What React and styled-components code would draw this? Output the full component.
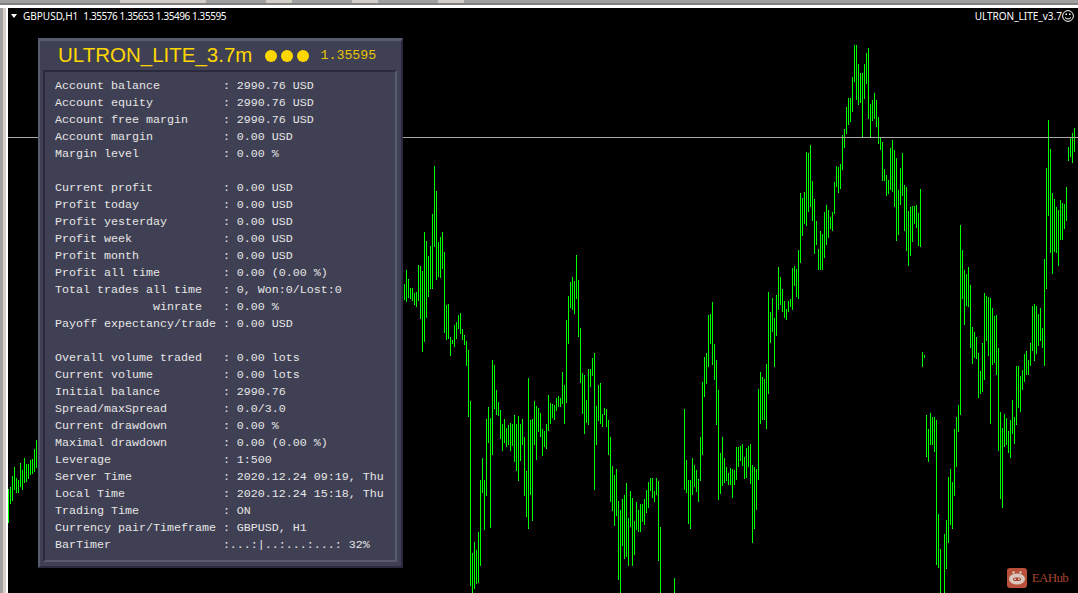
import React from 'react';
import styled, {createGlobalStyle} from 'styled-components';

// bar data is [top, bottom] read off the chart at 3x, every second pixel; null = no bar
const LEFT_BARS = {x: 8, y: 440, bars: [[147,250],[141,192],[108,183],[81,150],[114,159],[120,159],[69,141],[90,150],[54,129],[72,126],[72,117],[60,105],[57,102],[27,96],[0,84]]};

const MID_BARS_A = {x: 404, y: 160, bars: [[372,420],[330,426],[357,414],[384,417],[384,423],[399,435],[396,441],[315,423],[318,477],[333,576],[216,546],[243,474],[288,411],[258,387],[162,387],[18,261],[93,360],[246,351],[231,354],[216,327],[276,519],[435,540],[432,537],[531,588],[540,552],[495,561],[486,537],[465,507],[459,522],[507,540],[525,555],[543,618],[570,771],[723,1278],[1179,1299],[1146,1287],[1170,1272],[1116,1269],[960,1218],[894,999],[960,1110],[777,1008],[741,849],[774,1104],[600,885],[615,747],[690,765],[726,768],[750,837],[792,873],[777,849],[804,861],[795,855],[789,873],[792,858],[765,906],[792,933],[768,963],[792,903],[777,855],[831,1008],[933,1071],[654,1107],[780,1005],[777,1083],[723,855],[738,900],[744,816],[759,831],[807,888],[813,861],[792,867],[705,813],[729,792],[732,774],[735,780],[714,753],[708,741],[714,741],[636,732],[675,792],[480,729],[408,552],[366,444],[351,450],[363,462],[285,417],[360,531],[504,669],[639,762],[645,822],[720,789],[627,795],[627,681],[594,648],[579,990],[738,855],[675,783]]};

const MID_BARS_B = {x: 600, y: 250, bars: [[399,522],[492,531],[474,495],[477,531],[510,615],[561,756],[648,783],[675,828],[657,798],[753,990],[780,1029],[747,888],[735,927],[699,921],[804,948],[723,831],[744,948],[813,915],[756,840],[780,846],[762,846],[762,816],[747,825],[720,789],[696,774],[684,723],[684,744],[723,756],[684,735],[693,933],[831,1029],null,null,null,null,null,null,[984,1029],null,null,null,null,[477,720],[630,729],[690,822],[690,837],[624,735],[645,711],[660,726],[687,756],[561,693],[396,615],[321,441],[309,402],[195,351],[192,282],[156,345],[282,390],[330,525],[420,750],[609,732],[561,708],[624,699],[651,693],[669,705],[654,705],[657,744],[660,705],[591,690],[591,651],[588,633],[582,648],[621,687],[594,684],[588,651],[582,702],[645,879],[651,837],[657,780],[417,690],[366,522],[381,510],[387,510],[342,537],[126,432],[186,279],[144,246],[204,351],[135,258],[51,180],[81,165],[117,186],[153,204],[177,210],[153,186],[147,171],[54,180],[48,108],[57,141],[0,147]]};

const PEAK_BARS = {x: 800, y: 30, bars: [[490,700],[505,618],[487,582],[366,587],[370,545],[345,530],[453,572],[507,671],[573,645],[657,720],[603,720],[612,720],[546,683],[525,645],[540,623],[561,597],[546,603],[456,552],[408,471],[411,489],[402,477],[315,420],[297,354],[231,312],[204,285],[204,276],[141,246],[45,156],[45,210],[102,225],[129,219],[129,324],[102,207],[69,162],[54,267],[222,324],[210,273],[189,267],[210,291],[261,342],[324,360],[336,453],[417,453],[435,498],[450,492],[354,480],[330,486],[360,531],[384,633],[480,615],[414,525],[369,498],[465,603],[471,663],[543,708],[531,678],[528,636],[528,582],[525,594],[549,648],[477,651]]};

const RIGHT_BARS = {x: 922, y: 110, bars: [[726,771],[735,744],[915,1041],[957,1056],[909,1005],[921,1005],[921,1026],[930,1365],[1212,1374],[1317,1449],null,[1272,1449],[1230,1377],[1101,1299],[1077,1245],[1116,1257],[957,1158],[921,1071],[885,966],[345,915],[420,567],[480,645],[492,588],[471,591],[525,714],[651,762],[666,744],[681,747],[729,864],[783,852],[699,846],[549,810],[558,693],[561,738],[564,942],[594,765],[618,759],[615,795],[714,1023],[906,1167],[954,1194],[912,1011],[924,1005],[963,1029],[930,1044],[870,972],[921,1002],[768,945],[768,894],[798,906],[780,840],[732,816],[723,795],[750,795],[699,768],[588,723],[582,753],[588,732],[612,708],[594,693],[654,714],[447,768],[174,537],[30,318],[117,429],[249,492],[267,426],[291,429],[300,468],[270,390],[279,390],[282,357],[231,333],[111,153],[84,141],[69,159],[54,126]]};

const SERIES = [LEFT_BARS, MID_BARS_A, MID_BARS_B, PEAK_BARS, RIGHT_BARS];

const STATS = [
	'Account balance         : 2990.76 USD',
	'Account equity          : 2990.76 USD',
	'Account free margin     : 2990.76 USD',
	'Account margin          : 0.00 USD',
	'Margin level            : 0.00 %',
	'',
	'Current profit          : 0.00 USD',
	'Profit today            : 0.00 USD',
	'Profit yesterday        : 0.00 USD',
	'Profit week             : 0.00 USD',
	'Profit month            : 0.00 USD',
	'Profit all time         : 0.00 (0.00 %)',
	'Total trades all time   : 0, Won:0/Lost:0',
	'              winrate   : 0.00 %',
	'Payoff expectancy/trade : 0.00 USD',
	'',
	'Overall volume traded   : 0.00 lots',
	'Current volume          : 0.00 lots',
	'Initial balance         : 2990.76',
	'Spread/maxSpread        : 0.0/3.0',
	'Current drawdown        : 0.00 %',
	'Maximal drawdown        : 0.00 (0.00 %)',
	'Leverage                : 1:500',
	'Server Time             : 2020.12.24 09:19, Thu',
	'Local Time              : 2020.12.24 15:18, Thu',
	'Trading Time            : ON',
	'Currency pair/Timeframe : GBPUSD, H1',
	'BarTimer                :...:|..:...:...: 32%',
];

function PriceChart() {
	return (
		<ChartSvg viewBox="0 0 1078 593" width="1078" height="593">
			{SERIES.map(series => series.bars.map((bar, i) => {
				if (!bar) return null;
				const x = series.x + i * 2 + 0.5;
				return (
					<line
						key={`${series.x}_${i}`}
						x1={x}
						x2={x}
						y1={series.y + Math.round(bar[0] / 3)}
						y2={series.y + Math.round(bar[1] / 3)}
						stroke="#00ff00"
						strokeWidth="1"
					/>
				);
			}))}
			<line x1="8" x2="1078" y1="137.5" y2="137.5" stroke="#a8a8a8" strokeWidth="1" />
		</ChartSvg>
	);
}

function Smiley() {
	return (
		<svg width="12" height="12" viewBox="0 0 12 12" fill="none" stroke="#ffffff">
			<circle cx="6" cy="6" r="5.4" strokeWidth="1" />
			<rect x="3.5" y="3.5" width="1.5" height="1.5" fill="#ffffff" stroke="none" />
			<rect x="7" y="3.5" width="1.5" height="1.5" fill="#ffffff" stroke="none" />
			<path d="M3 7.5 C4 9.4 8 9.4 9 7.5" strokeWidth="1" />
		</svg>
	);
}

function HubLogo() {
	return (
		<svg width="20" height="20" viewBox="0 0 20 20">
			<rect width="20" height="20" rx="3" fill="#b9513a" />
			<circle cx="6.5" cy="4.5" r="1.2" fill="#d8c8c0" />
			<circle cx="13.5" cy="4.5" r="1.2" fill="#d8c8c0" />
			<ellipse cx="10" cy="11" rx="8" ry="5.5" fill="#d8c8c0" />
			<rect x="6" y="9.5" width="8" height="3.5" rx="1.7" fill="#a84632" />
			<circle cx="8" cy="11.2" r="0.9" fill="#d8c8c0" />
			<circle cx="12" cy="11.2" r="0.9" fill="#d8c8c0" />
		</svg>
	);
}

export default function App() {
	return (
		<>
			<GlobalStyle />
			<Window>
				<TopStrip>
					<StripTab width={86} />
					<StripTab width={26} />
					<StripTab width={26} />
					<StripTab width={26} />
				</TopStrip>
				<Body>
					<Rail />
					<Chart>
						<PriceChart />
						<ChartHeader>
							<SymbolInfo>
								<Caret />
								<span>GBPUSD,H1</span>
								<Quotes>1.35576 1.35653 1.35496 1.35595</Quotes>
							</SymbolInfo>
							<ExpertName>
								<span>ULTRON_LITE_v3.7</span>
								<Smiley />
							</ExpertName>
						</ChartHeader>
						<Panel>
							<PanelHead>
								<PanelTitle>ULTRON_LITE_3.7m</PanelTitle>
								<Lights>
									<Light />
									<Light />
									<Light />
								</Lights>
								<PanelPrice>1.35595</PanelPrice>
							</PanelHead>
							<StatsBox>
								{STATS.map((line, i) => (
									<StatRow key={i}>{line}</StatRow>
								))}
							</StatsBox>
						</Panel>
						<Watermark>
							<HubLogo />
							<span>EAHub</span>
						</Watermark>
					</Chart>
				</Body>
			</Window>
		</>
	);
}

const GlobalStyle = createGlobalStyle`
	html, body {
		margin: 0;
		padding: 0;
		background: #000000;
		overflow: hidden;
	}
`;

const Window = styled.div`
	width: 1078px;
	height: 593px;
	display: flex;
	flex-direction: column;
	background: #ffffff;
	overflow: hidden;
`;

const TopStrip = styled.div`
	flex: none;
	height: 5px;
	margin-bottom: 3px;
	display: flex;
	gap: 60px;
	padding-left: 120px;
	background: #a0a0a0;
	border-bottom: 2px solid #808080;
	box-sizing: border-box;
`;

const StripTab = styled.div`
	width: ${props => props.width}px;
	height: 3px;
	background: #d4d0c8;
`;

const Body = styled.div`
	flex: 1;
	display: flex;
	min-height: 0;
`;

const Rail = styled.div`
	flex: none;
	width: 6px;
	margin-right: 2px;
	box-sizing: border-box;
	background: #d4d0c8;
	border-left: 3px solid #a0a0a0;
`;

const Chart = styled.div`
	position: relative;
	flex: 1;
	background: #000000;
	overflow: hidden;
`;

const ChartSvg = styled.svg`
	position: absolute;
	left: -8px;
	top: -8px;
`;

const ChartHeader = styled.div`
	position: relative;
	display: flex;
	justify-content: space-between;
	align-items: center;
	height: 16px;
	padding: 0 4px 0 3px;
	color: #ffffff;
	font-family: 'Noto Sans', sans-serif;
	font-size: 10px;
	white-space: pre;
`;

const SymbolInfo = styled.div`
	display: flex;
	align-items: center;
	gap: 5px;
`;

const Quotes = styled.span`
	letter-spacing: -0.42px;
`;

const Caret = styled.i`
	width: 0;
	height: 0;
	margin-right: 1px;
	border-left: 3.5px solid transparent;
	border-right: 3.5px solid transparent;
	border-top: 4px solid #ffffff;
`;

const ExpertName = styled.div`
	display: flex;
	align-items: center;
`;

const Panel = styled.div`
	position: absolute;
	left: 30px;
	top: 30px;
	width: 365px;
	height: 530px;
	box-sizing: border-box;
	display: flex;
	flex-direction: column;
	padding: 0 4px 4px 3px;
	background: #404054;
	border-top: 3px solid #585a70;
	border-left: 2px solid #585a70;
	border-right: 2px solid #2a2a3c;
	border-bottom: 2px solid #2a2a3c;
`;

const PanelHead = styled.div`
	flex: none;
	height: 29px;
	display: flex;
	align-items: center;
	padding-left: 15px;
`;

const PanelTitle = styled.div`
	color: #ffd700;
	font-family: 'Liberation Sans', Arial, sans-serif;
	font-size: 20.5px;
	line-height: 1;
`;

const Lights = styled.div`
	display: flex;
	gap: 4px;
	margin-left: 13px;
`;

const Light = styled.i`
	width: 12px;
	height: 12px;
	border-radius: 50%;
	background: #ffd700;
`;

const PanelPrice = styled.div`
	margin-left: 11px;
	color: #e6c400;
	font-family: 'Liberation Mono', monospace;
	font-size: 13.3px;
`;

const StatsBox = styled.div`
	flex: 1;
	box-sizing: border-box;
	padding: 6px 0 0 10px;
	border-top: 2px solid #2a2a3c;
	border-left: 2px solid #2a2a3c;
	border-right: 2px solid #585a70;
	border-bottom: 2px solid #585a70;
`;

const StatRow = styled.div`
	height: 17px;
	line-height: 17px;
	white-space: pre;
	color: #e6e6e6;
	font-family: 'Liberation Mono', 'Courier New', monospace;
	font-size: 11.667px;
`;

const Watermark = styled.div`
	position: absolute;
	right: 10px;
	bottom: 5px;
	display: flex;
	align-items: center;
	gap: 5px;
	color: #a5432f;
	font-family: 'Liberation Serif', serif;
	font-size: 13px;
	letter-spacing: -0.7px;
`;
